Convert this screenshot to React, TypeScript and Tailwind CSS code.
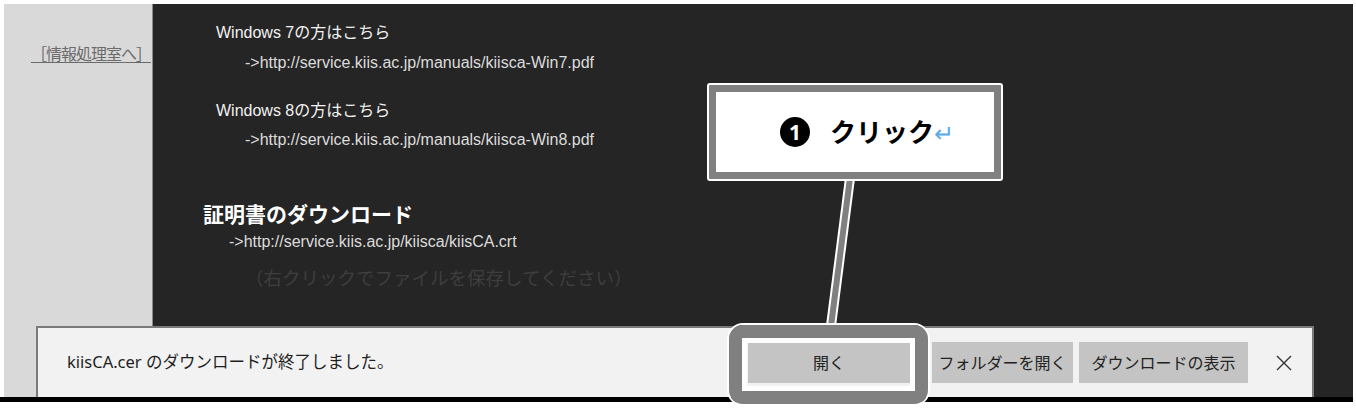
import React from 'react'

const jp = { fontFamily: '"Noto Sans", "Noto Sans CJK JP", sans-serif' }
const latin = { fontFamily: '"Liberation Sans", "Noto Sans CJK JP", sans-serif' }

const App = () => {
  return (
    <div className="relative w-[1356px] h-[408px] bg-white overflow-hidden">
      {/* page */}
      <div className="flex pt-[4px] pl-[4px] pr-[3px] h-[397px]">
        <div className="w-[148px] bg-[#d9d9d9] pt-[38px] pl-[27px]" style={jp}>
          <span className="text-[16px] leading-[22px] text-[#6b6b6b] underline underline-offset-2 whitespace-nowrap tracking-[-1px]">
            ［情報処理室へ］
          </span>
        </div>
        <div className="flex-1 bg-[#252525] border-l border-[#8a8a8a] pl-[63px]" style={latin}>
          <div className="mt-[19px] text-[16px] leading-[20px] text-[#f2f2f2]">Windows 7の方はこちら</div>
          <div className="mt-[10px] ml-[29px] text-[16px] leading-[20px] text-[#dcdcdc]">
            -&gt;http://service.kiis.ac.jp/manuals/kiisca-Win7.pdf
          </div>
          <div className="mt-[28px] text-[16px] leading-[20px] text-[#f2f2f2]">Windows 8の方はこちら</div>
          <div className="mt-[9px] ml-[29px] text-[16px] leading-[20px] text-[#dcdcdc]">
            -&gt;http://service.kiis.ac.jp/manuals/kiisca-Win8.pdf
          </div>
          <div className="mt-[51px] -ml-[13px] text-[21px] leading-[28px] font-bold text-white">証明書のダウンロード</div>
          <div className="mt-[3px] ml-[13px] text-[16px] leading-[20px] text-[#dcdcdc]">
            -&gt;http://service.kiis.ac.jp/kiisca/kiisCA.crt
          </div>
          <div className="mt-[13px] ml-[29px] text-[18.5px] leading-[26px] text-[#3e3e3e]" style={jp}>
            （右クリックでファイルを保存してください）
          </div>
        </div>
      </div>
      <div className="h-[5px] bg-black mr-[3px]" />

      {/* download notification bar */}
      <div
        className="absolute left-[36px] top-[326px] w-[1278px] h-[71px] bg-[#f2f2f2] border-t-2 border-l-2 border-r-2 border-[#7a7a7a] flex items-center"
        style={jp}
      >
        <span className="ml-[29px] text-[16.5px] text-[#1e1e1e]">kiisCA.cer のダウンロードが終了しました。</span>
        <div className="ml-auto flex items-center gap-[6px] mr-[20px]">
          <button className="w-[162px] h-[41px] bg-[#c4c4c4] text-[16px] text-[#222]">開く</button>
          <button className="ml-[16px] w-[141px] h-[41px] bg-[#c4c4c4] text-[16px] text-[#222]">フォルダーを開く</button>
          <button className="w-[169px] h-[41px] bg-[#c4c4c4] text-[16px] text-[#222]">ダウンロードの表示</button>
          <svg className="ml-[22px]" width="16" height="16" viewBox="0 0 16 16">
            <path d="M1 1 L15 15 M15 1 L1 15" stroke="#333" strokeWidth="1.4" />
          </svg>
        </div>
      </div>

      {/* connector line */}
      <svg className="absolute left-0 top-0" width="1356" height="408">
        <line x1="850" y1="178" x2="831" y2="326" stroke="#ffffff" strokeWidth="10" />
        <line x1="850" y1="178" x2="831" y2="326" stroke="#808080" strokeWidth="6" />
      </svg>

      {/* highlight ring around 開く */}
      <div className="absolute left-[727px] top-[323px] w-[203px] h-[83px] rounded-[16px] border-2 border-white">
        <div className="w-full h-full rounded-[14px] border-[13px] border-[#808080]">
          <div className="w-full h-full border-[5px] border-white" />
        </div>
      </div>

      {/* callout */}
      <div className="absolute left-[707px] top-[83px] w-[296px] h-[98px] border-2 border-white rounded-[3px] bg-[#808080] p-[7px]">
        <div className="w-full h-full bg-white flex items-center pl-[64px]" style={jp}>
          <div className="w-[30px] h-[30px] rounded-full bg-black text-white text-[21px] font-bold leading-[30px] text-center">
            1
          </div>
          <span className="ml-[20px] text-[26px] leading-[36px] font-bold text-black">クリック</span>
          <span className="text-[24px] leading-[36px] text-[#5aaaf0] mt-[2px]">↵</span>
        </div>
      </div>
    </div>
  )
}

export default App
